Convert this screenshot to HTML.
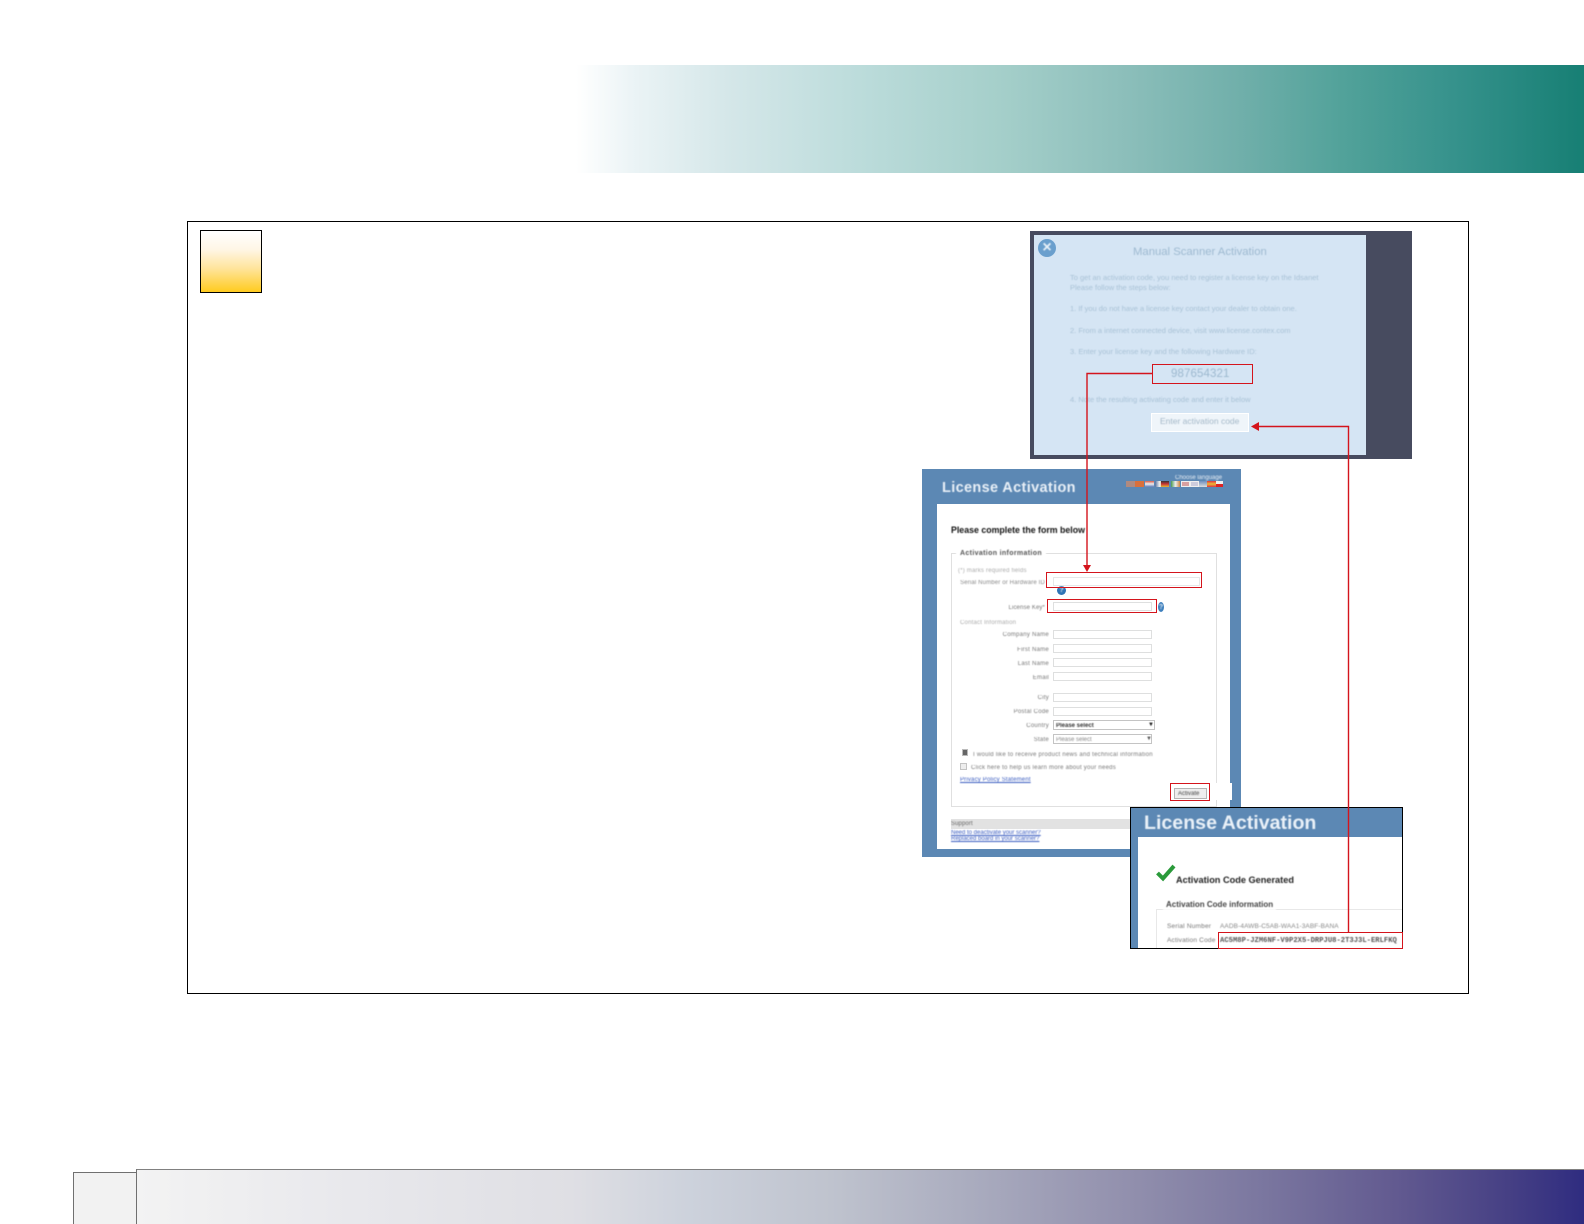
<!DOCTYPE html>
<html><head><meta charset="utf-8"><style>
html,body{margin:0;padding:0;background:#fff}
body{position:relative;width:1584px;height:1224px;overflow:hidden;font-family:"Liberation Sans",sans-serif}
div,span,a{position:absolute;box-sizing:border-box;white-space:nowrap}
.t{filter:blur(.45px)}
.in{left:1053px;width:99px;height:9px;background:#fff;border:1px solid #dedfdf}
.l{right:535px;font-size:6px;color:#777;line-height:8px;letter-spacing:.25px}
.m{font-size:7.5px;color:#a9c2d6;line-height:9px;left:1070px}
.r{border:1px solid #d4141c}
.f{top:481px;width:9px;height:6px}
</style></head><body>
<div style="left:576px;top:65px;width:1008px;height:108px;background:linear-gradient(90deg,#fff 0%,#eaf3f5 6%,#d5e7e9 15%,#bcdcdb 28%,#a5cfca 42%,#8dbfbb 54%,#70afaa 66%,#52a29a 76%,#36928c 87%,#177f74 100%)"></div>

<div style="left:187px;top:221px;width:1282px;height:773px;border:1px solid #000"></div>
<div style="left:200px;top:230px;width:62px;height:63px;border:1px solid #000;background:linear-gradient(180deg,#fff 0%,#fff6e6 30%,#ffe49a 62%,#ffcb1f 100%)"></div>

<!-- Manual Scanner Activation -->
<div style="left:1030px;top:231px;width:382px;height:228px;background:#474b5f"></div>
<div style="left:1034px;top:235px;width:332px;height:220px;background:#d5e5f4"></div>
<div style="left:1038px;top:239px;width:18px;height:18px;border-radius:50%;background:#6a9fcd"></div>
<div class="t" style="left:1041px;top:238px;width:12px;height:20px;line-height:20px;text-align:center;color:#e8f1f8;font-size:16px;font-weight:bold">×</div>
<div class="t" style="left:1133px;top:245px;font-size:11.3px;line-height:14px;color:#9db9d0">Manual Scanner Activation</div>
<div class="t m" style="top:273px">To get an activation code, you need to register a license key on the Idsanet</div>
<div class="t m" style="top:283px">Please follow the steps below:</div>
<div class="t m" style="top:304px">1. If you do not have a license key contact your dealer to obtain one.</div>
<div class="t m" style="top:326px">2. From a internet connected device, visit www.license.contex.com</div>
<div class="t m" style="top:347px">3. Enter your license key and the following Hardware ID:</div>
<div class="t" style="left:1171px;top:367px;font-size:11.5px;line-height:14px;color:#9cb8cf;letter-spacing:.1px">987654321</div>
<div class="t m" style="top:395px">4. Note the resulting activating code and enter it below</div>
<div style="left:1151px;top:413px;width:98px;height:19px;background:#eff5fa;border:1px solid #fff"></div>
<div class="t" style="left:1160px;top:414px;font-size:8.5px;line-height:14px;color:#a4b8c8">Enter activation code</div>

<!-- License activation form -->
<div style="left:922px;top:469px;width:319px;height:388px;background:#5c88b4"></div>
<div style="left:937px;top:504px;width:293px;height:345px;background:#fff"></div>
<div class="t" style="left:942px;top:479px;font-size:14.5px;font-weight:bold;line-height:18px;color:#e9f0f7;letter-spacing:.35px">License Activation</div>
<div class="t" style="left:1175px;top:474px;font-size:6px;line-height:8px;color:#e8eef5">Choose language</div>
<div class="f" style="left:1126px;background:#b08a80"></div><div class="f" style="left:1135px;background:#d9703c"></div>
<div class="f" style="left:1145px;background:linear-gradient(#d85a4a,#eee,#5d78b8)"></div>
<div class="f" style="left:1155px;background:linear-gradient(90deg,#5570a0,#eee,#d8a040)"></div>
<div class="f" style="left:1161px;width:8px;background:linear-gradient(#333,#c33,#db3)"></div>
<div class="f" style="left:1171px;background:linear-gradient(90deg,#4a9a50,#eee,#c84)"></div>
<div class="f" style="left:1181px;background:#d8a0a0;border:1px solid #eee"></div>
<div class="f" style="left:1190px;background:#ccd;border:1px solid #eee"></div>
<div class="f" style="left:1199px;background:linear-gradient(#6d8fc0,#ddd)"></div>
<div class="f" style="left:1207px;background:linear-gradient(#d34,#eb3,#d34)"></div>
<div class="f" style="left:1216px;width:7px;background:linear-gradient(#eee 50%,#d22 50%)"></div>

<div class="t" style="left:951px;top:525px;font-size:8.8px;font-weight:bold;line-height:11px;color:#111">Please complete the form below</div>
<div style="left:951px;top:553px;width:266px;height:254px;border:1px solid #e0e0e0"></div>
<div class="t" style="left:956px;top:549px;padding:0 4px;background:#fff;font-size:7px;font-weight:bold;line-height:10px;color:#555;letter-spacing:.35px">Activation information</div>
<div class="t" style="left:958px;top:567px;font-size:6px;line-height:8px;color:#aaa;letter-spacing:.2px">(*) marks required fields</div>
<div class="t l" style="top:579px;right:539px;color:#888;letter-spacing:.15px">Serial Number or Hardware ID</div>
<div class="in" style="top:577px;width:147px;border-color:#e6e8e8"></div>
<div style="left:1057px;top:586px;width:9px;height:9px;border-radius:50%;background:#2f74b5"></div>
<div class="t" style="left:1057px;top:586px;width:9px;text-align:center;font-size:7px;font-weight:bold;line-height:9px;color:#dfeaf4">?</div>
<div class="t l" style="top:604px;right:539px;letter-spacing:.12px">License Key*</div>
<div class="in" style="top:602px"></div>
<div style="left:1158px;top:602px;width:6px;height:10px;border-radius:50%;background:#3d7fbd"></div>
<div class="t" style="left:1158px;top:603px;width:6px;text-align:center;font-size:7px;font-weight:bold;line-height:9px;color:#dfeaf4">?</div>
<div class="t" style="left:960px;top:619px;font-size:6px;line-height:8px;color:#aaa;letter-spacing:.2px">Contact Information</div>
<div class="t l" style="top:631px">Company Name</div><div class="in" style="top:630px"></div>
<div class="t l" style="top:646px">First Name</div><div class="in" style="top:644px"></div>
<div class="t l" style="top:660px">Last Name</div><div class="in" style="top:658px"></div>
<div class="t l" style="top:674px">Email</div><div class="in" style="top:672px"></div>
<div class="t l" style="top:694px">City</div><div class="in" style="top:693px"></div>
<div class="t l" style="top:708px">Postal Code</div><div class="in" style="top:707px"></div>
<div class="t l" style="top:722px">Country</div>
<div class="in" style="top:720px;width:102px;height:10px;border-color:#c4c4c4"></div>
<div class="t" style="left:1056px;top:722px;font-size:6px;font-weight:bold;line-height:8px;color:#333">Please select</div>
<div class="t" style="left:1148px;top:721px;font-size:6px;line-height:8px;color:#111">▼</div>
<div class="t l" style="top:736px">State</div>
<div class="in" style="top:734px;height:10px;border-color:#c4c4c4"></div>
<div class="t" style="left:1056px;top:736px;font-size:6px;line-height:8px;color:#888">Please select</div>
<div class="t" style="left:1146px;top:735px;font-size:6px;line-height:8px;color:#555">▼</div>
<div style="left:962px;top:749px;width:6px;height:7px;background:#666;border:1px solid #bbb"></div>
<div class="t" style="left:973px;top:751px;font-size:6px;line-height:8px;color:#777;letter-spacing:.27px">I would like to receive product news and technical information</div>
<div style="left:960px;top:763px;width:7px;height:7px;border:1px solid #c4c4c4;background:#eee"></div>
<div class="t" style="left:971px;top:764px;font-size:6px;line-height:8px;color:#777;letter-spacing:.25px">Click here to help us learn more about your needs</div>
<a class="t" style="left:960px;top:776px;font-size:6px;line-height:8px;color:#3a5cc0;text-decoration:underline;letter-spacing:.18px">Privacy Policy Statement</a>
<div style="left:1208px;top:783px;width:24px;height:17px;background:#fff"></div>
<div style="left:1174px;top:788px;width:33px;height:11px;background:#eee;border:1px solid #b4b4b4"></div>
<div class="t" style="left:1178px;top:790px;font-size:6px;line-height:8px;color:#444">Activate</div>
<div class="r" style="left:1170px;top:783px;width:40px;height:18px"></div>
<div style="left:951px;top:819px;width:190px;height:10px;background:#e2e2e2"></div>
<div class="t" style="left:951px;top:820px;font-size:6px;line-height:8px;color:#666;letter-spacing:.1px">Support</div>
<a class="t" style="left:951px;top:830px;font-size:6px;line-height:7px;color:#3a5cc0;text-decoration:underline;letter-spacing:0">Need to deactivate your scanner?</a>
<a class="t" style="left:951px;top:836px;font-size:6px;line-height:7px;color:#3a5cc0;text-decoration:underline;letter-spacing:0">Replaced board in your scanner?</a>
<div class="r" style="left:1046px;top:572px;width:156px;height:16px"></div>
<div class="r" style="left:1047px;top:599px;width:110px;height:14px"></div>

<!-- Generated panel -->
<div style="left:1130px;top:807px;width:273px;height:142px;background:#fff;border:1px solid #000"></div>
<div style="left:1131px;top:808px;width:271px;height:29px;background:#5c88b4"></div>
<div style="left:1131px;top:837px;width:7px;height:111px;background:#5c88b4"></div>
<div class="t" style="left:1144px;top:812px;font-size:19.6px;font-weight:bold;line-height:22px;color:#eaf1f8">License Activation</div>
<svg style="position:absolute;left:1156px;top:864px" width="20" height="18" viewBox="0 0 20 18"><path d="M1.5 9 L7 14.5 L18 2" fill="none" stroke="#2a9a3a" stroke-width="4"/></svg>
<div class="t" style="left:1176px;top:874px;font-size:9.2px;font-weight:bold;line-height:12px;color:#222">Activation Code Generated</div>
<div style="left:1156px;top:909px;width:246px;height:39px;border:1px solid #e8e8e8;border-right:0;border-bottom:0"></div>
<div class="t" style="left:1163px;top:900px;padding:0 3px;background:#fff;font-size:8px;font-weight:bold;line-height:10px;color:#444;letter-spacing:0">Activation Code information</div>
<div class="t" style="left:1167px;top:923px;font-size:6.5px;line-height:8px;color:#777;letter-spacing:.2px">Serial Number</div>
<div class="t" style="left:1220px;top:923px;font-size:6.5px;line-height:8px;color:#888;letter-spacing:.1px">AADB-4AWB-C5AB-WAA1-3ABF-BANA</div>
<div class="t" style="left:1167px;top:937px;font-size:6.5px;line-height:8px;color:#777;letter-spacing:.2px">Activation Code</div>
<div class="t" style="left:1220px;top:937px;font-family:'Liberation Mono',monospace;font-size:7.2px;font-weight:bold;line-height:8px;color:#555">AC5M8P-JZM6NF-V9P2X5-DRPJU8-2T3J3L-ERLFKQ</div>
<div class="r" style="left:1218px;top:932px;width:185px;height:17px"></div>

<!-- Red connectors -->
<div class="r" style="left:1152px;top:364px;width:101px;height:20px"></div>
<svg style="position:absolute;left:0;top:0" width="1584" height="1224">
<path d="M1152 373.5H1087V567" fill="none" stroke="#d4141c" stroke-width="1.4"/>
<path d="M1083 565H1091L1087 572Z" fill="#d4141c"/>
<path d="M1348.5 932V426.5H1258" fill="none" stroke="#d4141c" stroke-width="1.4"/>
<path d="M1251 426.5L1259 422V431Z" fill="#d4141c"/>
</svg>

<!-- Footer -->
<div style="left:73px;top:1172px;width:64px;height:52px;background:#f2f2f2;border:1px solid #707070;border-bottom:0"></div>
<div style="left:136px;top:1169px;width:1448px;height:55px;background:linear-gradient(90deg,#f3f3f3 0%,#e8e8ec 15%,#dfdfe4 30%,#cdd2dc 38%,#bfc3ce 48%,#a9abbe 58%,#9391ae 68%,#7a769f 78%,#625a90 87%,#453f84 95%,#2f2c80 100%);border-top:1px solid #808080;border-left:1px solid #707070"></div>
</body></html>
